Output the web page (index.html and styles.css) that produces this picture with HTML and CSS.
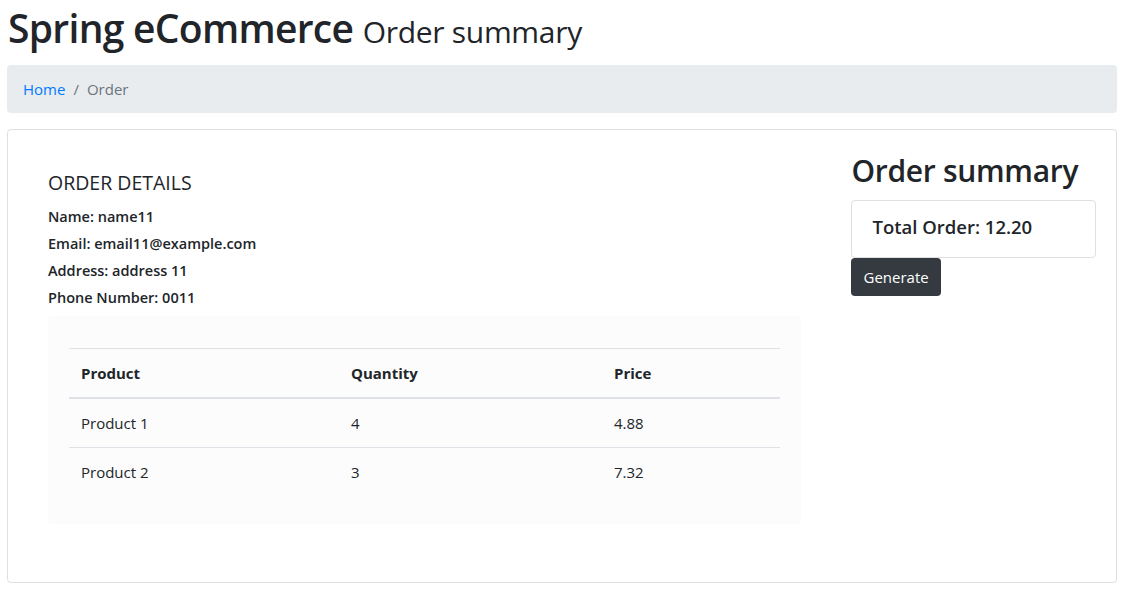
FILE: index.html
```html
<!DOCTYPE html>
<html lang="en">
<head>
<meta charset="utf-8">
<title>Spring eCommerce - Order summary</title>
<link rel="stylesheet" href="styles.css">
</head>
<body>
<div class="page">
  <h1 class="title">Spring eCommerce <small class="subtitle">Order summary</small></h1>
  <nav class="breadcrumb">
    <a class="crumb-link" href="#">Home</a>
    <span class="crumb-sep">/</span>
    <span class="crumb-active">Order</span>
  </nav>
  <div class="card">
    <div class="details">
      <h5 class="details-title">ORDER DETAILS</h5>
      <h6 class="detail">Name: name11</h6>
      <h6 class="detail">Email: email11@example.com</h6>
      <h6 class="detail">Address: address 11</h6>
      <h6 class="detail">Phone Number: 0011</h6>
      <div class="table-box">
        <table class="items">
          <thead>
            <tr><th class="col-product">Product</th><th class="col-qty">Quantity</th><th>Price</th></tr>
          </thead>
          <tbody>
            <tr><td>Product 1</td><td>4</td><td>4.88</td></tr>
            <tr><td>Product 2</td><td>3</td><td>7.32</td></tr>
          </tbody>
        </table>
      </div>
    </div>
    <div class="summary">
      <h2 class="summary-title">Order summary</h2>
      <div class="total-card">
        <h5 class="total">Total Order: 12.20</h5>
      </div>
      <button class="btn-dark" type="button">Generate</button>
    </div>
  </div>
</div>
</body>
</html>
```

FILE: styles.css
```css
* { box-sizing: border-box; }
html, body { margin: 0; padding: 0; }
body {
  font-family: "Open Sans", "Noto Sans", sans-serif;
  font-size: 16px;
  line-height: 1.5;
  color: #212529;
  background: #fff;
}
.page {
  width: 1127px;
  padding: 4px 10px 8px 7px;
}
.title {
  margin: 0 0 9px;
  padding-left: 1px;
  font-size: 39px;
  font-weight: 600;
  line-height: 48px;
  letter-spacing: -0.7px;
}
.subtitle {
  font-size: 30px;
  font-weight: 400;
  letter-spacing: -0.3px;
}
.breadcrumb {
  display: flex;
  align-items: center;
  height: 48px;
  padding: 0 16px;
  margin-bottom: 16px;
  background: #e9ecef;
  border-radius: 4px;
  font-size: 15px;
}
.crumb-link { color: #007bff; text-decoration: none; }
.crumb-sep { color: #6c757d; padding: 0 8px; }
.crumb-active { color: #6c757d; }
.card {
  display: flex;
  border: 1px solid #dfdfdf;
  border-radius: 4px;
  padding: 16px 20px 58px 40px;
  gap: 50px;
}
.details { width: 755px; padding-top: 26px; }
.details-title {
  margin: 0 0 13px;
  font-size: 19.5px;
  font-weight: 400;
  line-height: 22px;
}
.detail {
  margin: 0 0 8px;
  font-size: 14.5px;
  font-weight: 600;
  line-height: 19px;
}
.table-box {
  margin-top: 9px;
  background: #fcfcfc;
  border-radius: 4px;
  padding: 32px 21px 28px;
}
.items {
  width: 100%;
  border-collapse: collapse;
  font-size: 15px;
}
.items th, .items td {
  text-align: left;
  padding: 12px 12px;
  line-height: 24px;
  border-top: 1px solid #dee2e6;
}
.items th { font-weight: 700; border-bottom: 2px solid #dee2e6; }
.col-product { width: 270px; }
.col-qty { width: 263px; }
.summary { width: 245px; padding-top: 6px; }
.summary-title {
  margin: 0 0 10px;
  font-size: 30px;
  font-weight: 600;
  line-height: 38px;
  letter-spacing: -0.3px;
}
.total-card {
  border: 1px solid #dfdfdf;
  border-radius: 4px;
  padding: 14px 20px 18px;
}
.total {
  margin: 0;
  font-size: 18.5px;
  font-weight: 600;
  line-height: 24px;
}
.btn-dark {
  display: block;
  margin: 0;
  height: 38px;
  padding: 0 12px;
  border: none;
  border-radius: 4px;
  background: #343a40;
  color: #fff;
  font-family: inherit;
  font-size: 15px;
}
```
